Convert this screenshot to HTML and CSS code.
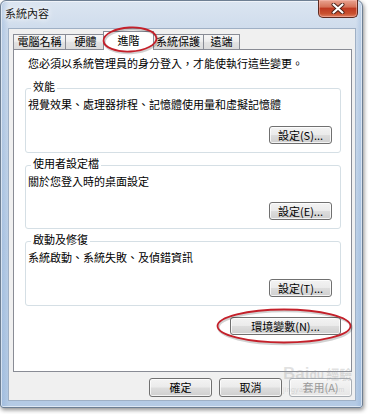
FILE: index.html
```html
<!DOCTYPE html>
<html lang="zh-Hant">
<head>
<meta charset="utf-8">
<title>系統內容</title>
<link rel="stylesheet" href="styles.css">
</head>
<body>
<div class="stage">
  <div class="window">
    <div class="titlebar">
      <span class="title">系統內容</span>
      <div class="close">
        <svg width="14" height="11" viewBox="0 0 14 11">
          <path d="M2.5 1.5 L11.5 9.5 M11.5 1.5 L2.5 9.5" stroke="#4a2018" stroke-width="4" stroke-linecap="round" fill="none"/>
          <path d="M2.5 1.5 L11.5 9.5 M11.5 1.5 L2.5 9.5" stroke="#ffffff" stroke-width="2.2" stroke-linecap="round" fill="none"/>
        </svg>
      </div>
    </div>
    <div class="client">
      <div class="tabs">
        <div class="tab t1">電腦名稱</div>
        <div class="tab t2">硬體</div>
        <div class="tab t3 active">進階</div>
        <div class="tab t4">系統保護</div>
        <div class="tab t5">遠端</div>
      </div>
      <div class="panel">
        <p class="intro">您必須以系統管理員的身分登入，才能使執行這些變更。</p>
        <section class="group g1">
          <div class="legend">效能</div>
          <p class="desc">視覺效果、處理器排程、記憶體使用量和虛擬記憶體</p>
          <button class="btn small">設定(S)...</button>
        </section>
        <section class="group g2">
          <div class="legend">使用者設定檔</div>
          <p class="desc">關於您登入時的桌面設定</p>
          <button class="btn small">設定(E)...</button>
        </section>
        <section class="group g3">
          <div class="legend">啟動及修復</div>
          <p class="desc">系統啟動、系統失敗、及偵錯資訊</p>
          <button class="btn small">設定(T)...</button>
        </section>
        <div class="env-row">
          <button class="btn env">環境變數(N)...</button>
        </div>
      </div>
      <div class="dialog-buttons">
        <button class="btn dlg">確定</button>
        <button class="btn dlg">取消</button>
        <button class="btn dlg disabled">套用(A)</button>
      </div>
    </div>
  </div>

  <svg class="marks" width="369" height="414" viewBox="0 0 369 414">
    <g fill="none" stroke="rgba(0,0,0,0.18)" stroke-width="2.5">
      <ellipse cx="131" cy="41" rx="26.5" ry="12" transform="rotate(-3 131 41)"/>
      <ellipse cx="285" cy="327.5" rx="66.5" ry="16.5"/>
    </g>
    <g fill="none" stroke="#c4202a" stroke-width="1.8">
      <ellipse cx="130" cy="39.5" rx="26.5" ry="12" transform="rotate(-3 130 39.5)"/>
      <ellipse cx="284" cy="326" rx="66.5" ry="16.5"/>
    </g>
  </svg>

  <div class="watermark">
    <div class="wm-logo">Bai<span class="wm-du">du</span><span class="wm-cn">經驗</span></div>
    <div class="wm-url">jingyan.baidu.com</div>
  </div>
</div>
</body>
</html>
```

FILE: styles.css
```css
* {
  box-sizing: border-box;
}

html,
body {
  margin: 0;
  padding: 0;
  background: #ffffff;
}

body {
  font-family: "Noto Sans CJK TC", "Noto Sans", "Liberation Sans", sans-serif;
  font-size: 11px;
  color: #000000;
}

.stage {
  position: relative;
  width: 369px;
  height: 414px;
  overflow: hidden;
}

/* ---------- window frame ---------- */
.window {
  width: 363px;
  height: 408px;
  border: 1px solid #6e7f93;
  border-radius: 6px 6px 3px 3px;
  background:
    linear-gradient(to right, rgba(120, 160, 210, 0.35) 0, rgba(120, 160, 210, 0) 8px, rgba(120, 160, 210, 0) 355px, rgba(120, 160, 210, 0.35) 100%),
    linear-gradient(to bottom, #dbe5f1 0, #cfdcec 28px, #bcd0e7 60%, #b4cae4 100%);
  box-shadow: 1px 2px 4px rgba(0, 0, 0, 0.45), inset 0 0 0 1px rgba(255, 255, 255, 0.55);
  display: flex;
  flex-direction: column;
}

.titlebar {
  height: 27px;
  flex: none;
  display: flex;
  justify-content: space-between;
  align-items: flex-start;
  padding: 0 4px 0 4px;
}

.title {
  line-height: 24px;
  font-size: 11px;
  color: #1a1a1a;
  text-shadow: 0 0 5px #ffffff, 0 0 8px #ffffff;
}

.close {
  width: 40px;
  height: 18px;
  margin-top: -1px;
  border: 1px solid #5e2a20;
  border-top: none;
  border-radius: 0 0 5px 5px;
  background: linear-gradient(to bottom, #e9a492 0, #d6735a 40%, #bf3a22 50%, #c9512f 80%, #de8063 100%);
  box-shadow: inset 0 0 0 1px rgba(255, 200, 190, 0.45);
  display: flex;
  align-items: center;
  justify-content: center;
}

/* ---------- client area ---------- */
.client {
  flex: 1;
  margin: 0 6px 6px 7px;
  background: #f0f0f0;
  border: 1px solid #9fb0c5;
  padding: 5px 3px 0 4px;
  display: flex;
  flex-direction: column;
}

.tabs {
  height: 15px;
  display: flex;
  align-items: flex-end;
}

.tab {
  height: 15px;
  border: 1px solid #898c95;
  border-bottom: none;
  background: linear-gradient(to bottom, #f6f6f6 0, #eeeeee 45%, #e2e2e2 55%, #dcdcdc 100%);
  text-align: center;
  font-size: 11px;
  line-height: 13px;
  color: #000;
}

.t1 { width: 53px; }
.t2 { width: 40px; border-left: none; }
.t4 { width: 52px; }
.t5 { width: 36px; border-left: none; }

.tab.active {
  position: relative;
  z-index: 2;
  width: 51px;
  height: 19px;
  margin: 0 -2px -1px -3px;
  background: #ffffff;
  line-height: 16px;
}

.panel {
  height: 323px;
  flex: none;
  border: 1px solid #898c95;
  background: #ffffff;
  padding: 6px 10px 0 11px;
  display: flex;
  flex-direction: column;
}

.intro {
  margin: 0 0 0 3px;
  line-height: 14px;
}

.group {
  border: 1px solid #d5dfe5;
  border-radius: 3px;
  padding: 0 8px 8px 2px;
  display: flex;
  flex-direction: column;
}

.g1 { height: 65px; margin-top: 18px; }
.g2 { height: 64px; margin-top: 12px; }
.g3 { height: 65px; margin-top: 12px; }

.legend {
  align-self: flex-start;
  margin: -9px 0 0 3px;
  padding: 0 2px;
  background: #ffffff;
  line-height: 13px;
}

.desc {
  margin: 4px 0 0 0;
  line-height: 14px;
}

/* ---------- buttons ---------- */
.btn {
  font-family: inherit;
  font-size: 11px;
  color: #000;
  padding: 0;
  border: 1px solid #707070;
  border-radius: 3px;
  background: linear-gradient(to bottom, #f3f3f3 0, #ebebeb 48%, #dddddd 52%, #cfcfcf 100%);
  box-shadow: inset 0 0 0 1px rgba(255, 255, 255, 0.75);
  line-height: 15px;
}

.small {
  margin-top: auto;
  align-self: flex-end;
  width: 63px;
  height: 18px;
}

.env-row {
  margin-top: 11px;
  display: flex;
  justify-content: flex-end;
}

.env {
  width: 111px;
  height: 18px;
}

.dialog-buttons {
  margin-top: 6px;
  display: flex;
  justify-content: flex-end;
  gap: 7px;
}

.dlg {
  width: 63px;
  height: 19px;
}

.dlg.disabled {
  color: #9a9a9a;
  border-color: #a8adb2;
  background: linear-gradient(to bottom, #f5f5f5 0, #eeeeee 50%, #e6e6e6 100%);
}

/* ---------- annotation overlays ---------- */
.marks {
  position: absolute;
  left: 0;
  top: 0;
  z-index: 5;
  pointer-events: none;
}

.watermark {
  position: absolute;
  left: 283px;
  top: 364px;
  z-index: 6;
  pointer-events: none;
  color: rgba(150, 150, 150, 0.28);
  font-family: "Liberation Sans", sans-serif;
}

.wm-logo {
  font-size: 17px;
  font-weight: bold;
  line-height: 20px;
  white-space: nowrap;
}

.wm-du {
  font-size: 12px;
}

.wm-cn {
  font-family: "Noto Sans CJK TC", sans-serif;
  font-size: 13px;
  margin-left: 2px;
}

.wm-url {
  font-size: 7px;
  line-height: 9px;
  letter-spacing: 0.3px;
}
```
